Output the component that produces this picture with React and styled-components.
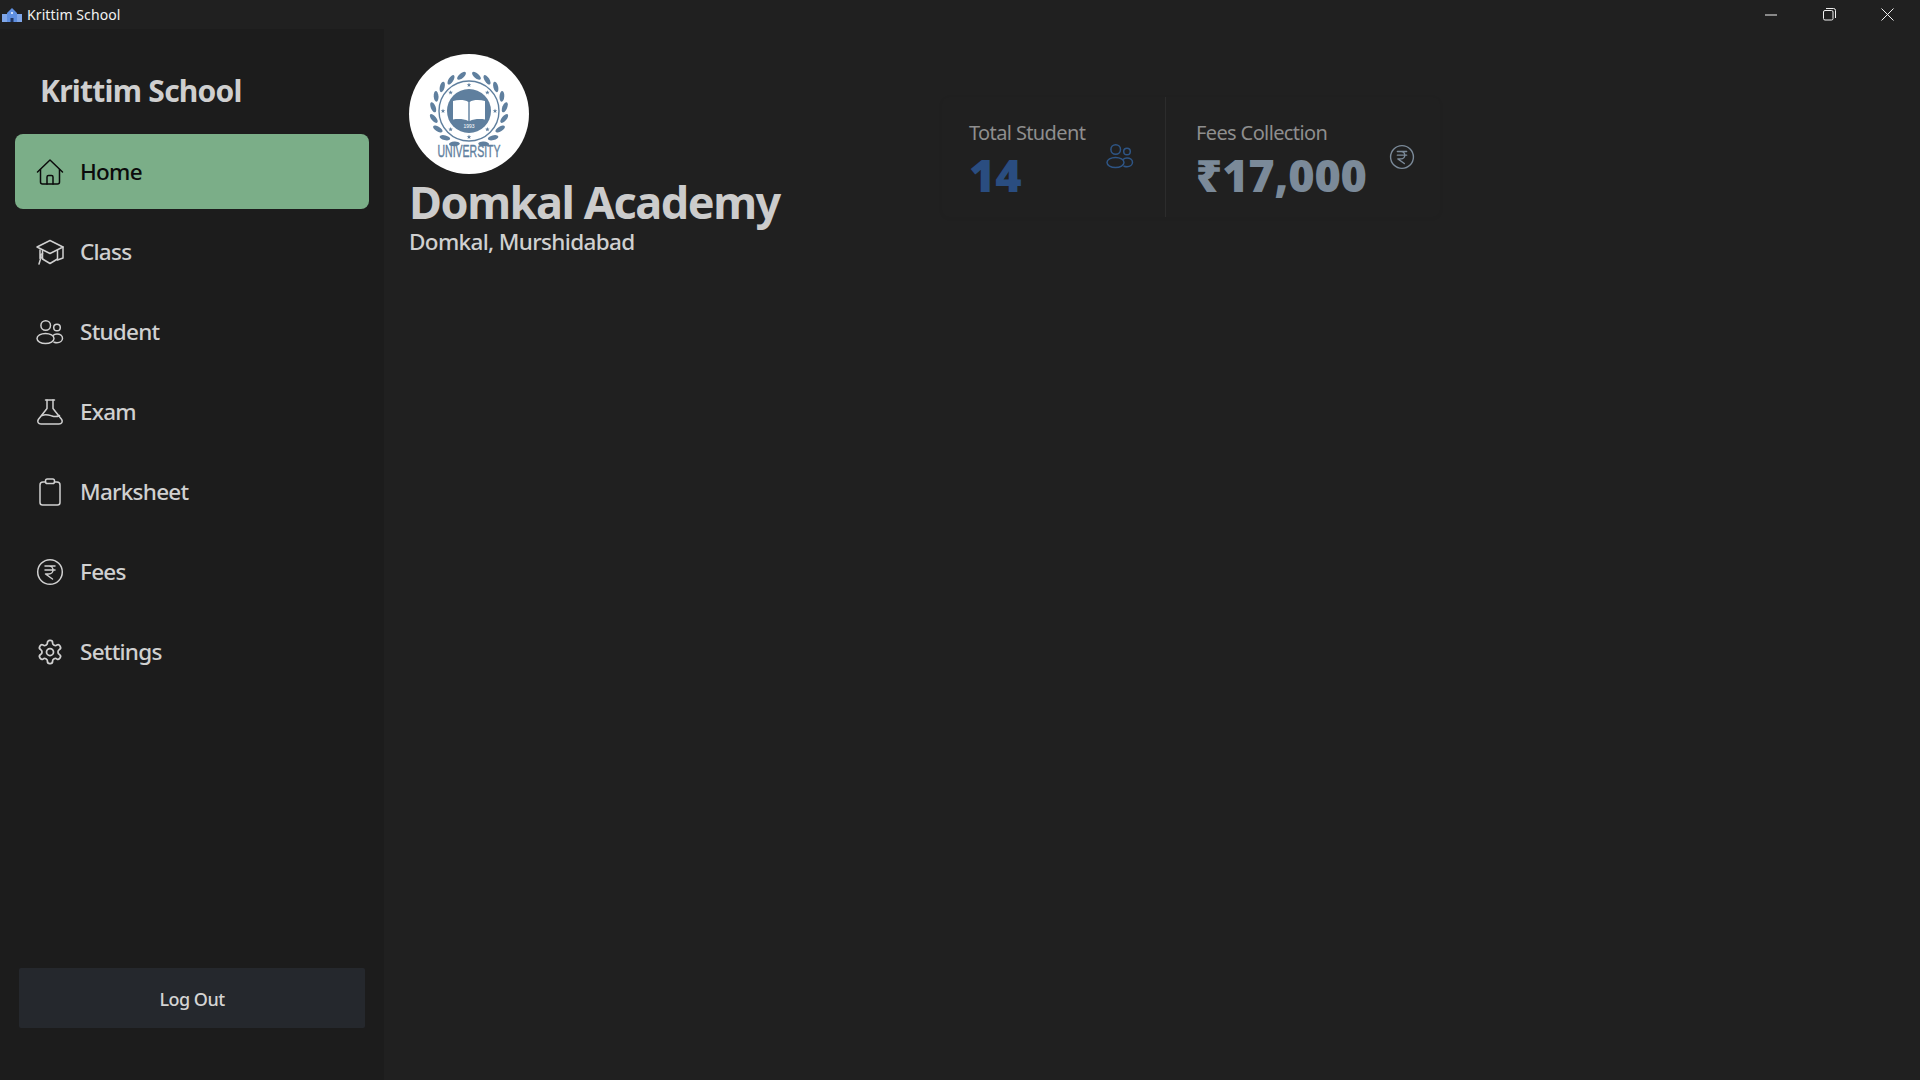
import React from "react";
import styled, { createGlobalStyle } from "styled-components";

const Global = createGlobalStyle`
  html, body { margin: 0; padding: 0; height: 100%; background: #202020; }
  #root { height: 100%; }
  * { box-sizing: border-box; }
  body { font-family: "Noto Sans", "Open Sans", "DejaVu Sans", sans-serif; overflow: hidden; }
`;

const Window = styled.div`
  width: 1920px; height: 1080px; display: flex; flex-direction: column; background: #202020;
`;
const TitleBar = styled.header`
  height: 29px; flex: none; display: flex; align-items: center; background: #202020; color: #f2f2f2; padding-right: 4px;
`;
const TitleIcon = styled.svg`
  width: 20px; height: 14px; margin-left: 2px; margin-right: 5px; display: block;
`;
const TitleText = styled.span`
  font-size: 14px; letter-spacing: 0.1px; flex: 1;
`;
const WinButton = styled.button`
  width: 58px; height: 29px; padding: 0; border: 0; background: none; display: flex;
  align-items: center; justify-content: center;
`;
const Body = styled.div`flex: 1; display: flex; min-height: 0;`;
const Sidebar = styled.aside`
  width: 384px; flex: none; background: #1c1c1c; display: flex; flex-direction: column; padding: 0 15px;
`;
const Brand = styled.h1`
  margin: 0; height: 105px; padding: 33px 0 0 25px; font-size: 30px; line-height: 57px; font-weight: 700;
  color: #cfcfcf; letter-spacing: -0.75px; white-space: nowrap;
`;
const Nav = styled.nav`display: flex; flex-direction: column; gap: 5px;`;
const NavItem = styled.a`
  height: 75px; display: flex; align-items: center; padding-left: 21px; gap: 16px; border-radius: 8px;
  font-size: 22.5px; letter-spacing: -0.75px; font-weight: 500;
  background: ${p => (p.$active ? "#7bae88" : "transparent")};
  color: ${p => (p.$active ? "#0b0b0b" : "#d0d0d0")};
`;
const NavIcon = styled.svg`
  width: 28px; height: 28px; flex: none; fill: none; stroke: currentColor; stroke-width: 1.5;
  stroke-linecap: round; stroke-linejoin: round;
`;
const LogoutButton = styled.button`
  margin: auto 4px 52px; height: 60px; border: 0; border-radius: 2px; background: #25282d; color: #d4d4d4;
  font-family: inherit; font-size: 18px; font-weight: 500; letter-spacing: -0.5px; padding: 2px 0 0;
`;
const Main = styled.main`
  flex: 1; padding: 25px; display: grid; grid-template-columns: 533px auto; align-content: start; justify-content: start;
`;
const School = styled.section`display: flex; flex-direction: column;`;
const LogoDisc = styled.div`
  width: 120px; height: 120px; border-radius: 50%; background: #fff; display: flex; align-items: center; justify-content: center;
`;
const SchoolName = styled.h2`
  margin: 1px 0 0; font-size: 45px; line-height: 54px; font-weight: 700; color: #cccccc; letter-spacing: -1.45px; white-space: nowrap;
`;
const SchoolPlace = styled.p`
  margin: 0; font-size: 22.5px; line-height: 26px; font-weight: 500; color: #d0d0d0; letter-spacing: -0.66px; white-space: nowrap;
`;
const Stats = styled.section`
  margin-top: 43px; height: 120px; display: flex; border-radius: 8px; box-shadow: 0 1px 4px rgba(0,0,0,.05);
`;
const Stat = styled.div`
  width: ${p => p.$w}px; padding: 23px 0 0 ${p => p.$pad}px; display: grid; grid-template-columns: ${p => p.$col}px 1fr;
  border-left: ${p => (p.$divided ? "1px solid #2c2c2c" : "0")};
`;
const StatText = styled.div`display: flex; flex-direction: column;`;
const StatLabel = styled.span`
  font-size: 20px; line-height: 26px; color: #8e8e8e; letter-spacing: -0.62px; white-space: nowrap;
`;
const StatValue = styled.span`
  font-size: 45px; line-height: 49px; margin-top: 4px; font-weight: 900; color: ${p => p.$color}; letter-spacing: -0.2px; white-space: nowrap;
`;
const StatIcon = styled.svg`
  width: ${p => p.$size}px; height: ${p => p.$size}px; margin-top: ${p => 50 - p.$size}px; fill: none; stroke: ${p => p.$color}; stroke-width: 1.5;
  stroke-linecap: round; stroke-linejoin: round;
`;

const HomeIcon = () => (
  <NavIcon viewBox="0 0 28 28">
    <path d="M1.5 14 14 2l12.5 12" />
    <path d="M4.5 11.5V24a2 2 0 0 0 2 2h15a2 2 0 0 0 2-2V11.5" />
    <path d="M11 26v-7a1.5 1.5 0 0 1 1.5-1.5h3A1.5 1.5 0 0 1 17 19v7" />
  </NavIcon>
);
const CapIcon = () => (
  <NavIcon viewBox="0 0 28 28">
    <path d="M14 2.5 27 9l-13 6.5L1 9z" />
    <path d="M6.5 12.5V21l7.5 4.5 7.500-4.500v-8.500" />
    <path d="M27 9v11l-5.500 2" />
    <path d="M4 12v8.500M6.500 15.500 5 16.500v3l1.500 1M4.500 21l-1.500 5" />
  </NavIcon>
);
const PeopleGlyph = () => (
  <>
    <circle cx="9.700" cy="7.500" r="4.800" />
    <circle cx="21" cy="9.500" r="3.300" />
    <ellipse cx="9.500" cy="20.500" rx="8.500" ry="5" />
    <path d="M17 17.500c1-1 2.500-1.500 4-1.500 3 0 5.500 1.700 5.500 4.300S24 24.800 21 24.800c-1 0-2-.2-3-.5" />
  </>
);
const StudentIcon = () => <NavIcon viewBox="0 0 28 28"><PeopleGlyph /></NavIcon>;
const FlaskIcon = () => (
  <NavIcon viewBox="0 0 28 28">
    <path d="M9.500 2h9" />
    <path d="M11 2v8.500L2.300 21.500C1 23.700 2.300 26 5 26h18c2.700 0 4-2.300 2.700-4.500L17 10.500V2" />
    <path d="M6 17.500c4-2 7-.500 10 .500s5.500.600 7.500-.500" />
  </NavIcon>
);
const ClipboardIcon = () => (
  <NavIcon viewBox="0 0 28 28">
    <path d="M9.500 4H7a3 3 0 0 0-3 3v17.500a2.500 2.500 0 0 0 2.500 2.500h15a2.500 2.500 0 0 0 2.500-2.500V7a3 3 0 0 0-3-3h-2.500" />
    <rect x="9.500" y="1" width="9" height="4.500" rx="1.800" />
  </NavIcon>
);
const RupeeGlyph = () => (
  <>
    <circle cx="14" cy="14" r="12.300" />
    <path d="M9 8h10M9 12h10M11 8h2a4 4 0 0 1 0 8h-3.500l7 5" />
  </>
);
const FeesIcon = () => <NavIcon viewBox="0 0 28 28"><RupeeGlyph /></NavIcon>;
const GearIcon = () => (
  <NavIcon viewBox="0 0 24 24" strokeWidth="1.3">
    <path d="M12.220 2h-.440a2 2 0 0 0-2 2v.180a2 2 0 0 1-1 1.730l-.430.250a2 2 0 0 1-2 0l-.150-.080a2 2 0 0 0-2.730.730l-.220.380a2 2 0 0 0 .730 2.730l.150.100a2 2 0 0 1 1 1.720v.510a2 2 0 0 1-1 1.740l-.150.090a2 2 0 0 0-.730 2.730l.220.380a2 2 0 0 0 2.730.730l.150-.080a2 2 0 0 1 2 0l.430.250a2 2 0 0 1 1 1.730V20a2 2 0 0 0 2 2h.440a2 2 0 0 0 2-2v-.180a2 2 0 0 1 1-1.730l.430-.250a2 2 0 0 1 2 0l.150.080a2 2 0 0 0 2.730-.730l.220-.390a2 2 0 0 0-.730-2.730l-.150-.080a2 2 0 0 1-1-1.740v-.500a2 2 0 0 1 1-1.740l.150-.090a2 2 0 0 0 .730-2.730l-.220-.380a2 2 0 0 0-2.730-.730l-.150.080a2 2 0 0 1-2 0l-.430-.250a2 2 0 0 1-1-1.730V4a2 2 0 0 0-2-2z" />
    <circle cx="12" cy="12" r="3" />
  </NavIcon>
);

const items = [
  ["Home", HomeIcon], ["Class", CapIcon], ["Student", StudentIcon], ["Exam", FlaskIcon],
  ["Marksheet", ClipboardIcon], ["Fees", FeesIcon], ["Settings", GearIcon],
];

const LOGO = "#5f7f9e";
const CX = 60;
const CY = 57;
const leaves = Array.from({ length: 9 }, (_, i) => {
  const deg = 12 + i * 18;
  const t = (deg * Math.PI) / 180;
  const r = 36;
  return [
    { x: CX + r * Math.sin(t), y: CY - r * Math.cos(t), rot: deg - 90 + 28 },
    { x: CX - r * Math.sin(t), y: CY - r * Math.cos(t), rot: -(deg - 90 + 28) },
  ];
}).flat();
const starPoints = (x, y, o = 2.4, n = 1) =>
  Array.from({ length: 10 }, (_, i) => {
    const a = (i * Math.PI) / 5 - Math.PI / 2;
    const rr = i % 2 ? n : o;
    return `${(x + rr * Math.cos(a)).toFixed(2)},${(y + rr * Math.sin(a)).toFixed(2)}`;
  }).join(" ");
const stars = Array.from({ length: 8 }, (_, i) => {
  const a = (i * Math.PI) / 4;
  return [CX + 26 * Math.sin(a), CY - 26 * Math.cos(a)];
});

const Logo = () => (
  <svg width="120" height="120" viewBox="0 0 120 120">
    {leaves.map((l, i) => (
      <ellipse key={i} cx={l.x} cy={l.y} rx="2.400" ry="5.400" fill={LOGO} transform={`rotate(${l.rot} ${l.x} ${l.y})`} />
    ))}
    <circle cx={CX} cy={CY} r="30" fill="none" stroke={LOGO} strokeWidth="1.400" />
    {stars.map(([x, y], i) => <polygon key={i} points={starPoints(x, y)} fill={LOGO} />)}
    <circle cx={CX} cy={CY} r="22" fill={LOGO} />
    <path d="M44 47c5-1.500 12-1.500 15.300 1v19c-4-2-10-2.500-15.300-1.500zM76 47c-5-1.500-12-1.500-15.300 1v19c4-2 10-2.500 15.300-1.500z" fill="#fff" />
    <text x={CX} y="74" textAnchor="middle" fontFamily="'Liberation Sans', sans-serif" fontSize="5" fill="#fff">1993</text>
    <text x={CX} y="66.500" textAnchor="middle" fontFamily="'Liberation Sans', sans-serif" fontSize="10.500" fill={LOGO} stroke={LOGO} strokeWidth=".25" transform="scale(1 1.550)">UNIVERSITY</text>
  </svg>
);

export default function App() {
  return (
    <Window>
      <Global />
      <TitleBar>
        <TitleIcon viewBox="0 0 20 14">
          <path d="M0 6h5v8H0zM15 6h5v8h-5z" fill="#7fa6e8" />
          <path d="M5 5 10 0l5 5v9H5z" fill="#5f8fe0" />
          <path d="M8.500 10h3v4h-3z" fill="#20345f" />
          <path d="M9 4h2v2H9z" fill="#cfe0fb" />
        </TitleIcon>
        <TitleText>Krittim School</TitleText>
        <WinButton aria-label="Minimize">
          <svg width="12" height="2" viewBox="0 0 12 2"><path d="M0 1h12" stroke="#f0f0f0" /></svg>
        </WinButton>
        <WinButton aria-label="Restore">
          <svg width="13" height="13" viewBox="0 0 13 13" fill="none" stroke="#f0f0f0">
            <rect x=".5" y="2.500" width="9.500" height="9.500" rx="1.500" />
            <path d="M3 .5h7.500a2 2 0 0 1 2 2V10" />
          </svg>
        </WinButton>
        <WinButton aria-label="Close">
          <svg width="13" height="13" viewBox="0 0 13 13"><path d="M.5.5l12 12M12.500.5l-12 12" stroke="#f0f0f0" /></svg>
        </WinButton>
      </TitleBar>
      <Body>
        <Sidebar>
          <Brand>Krittim School</Brand>
          <Nav>
            {items.map(([label, Icon], i) => (
              <NavItem key={label} $active={i === 0}><Icon />{label}</NavItem>
            ))}
          </Nav>
          <LogoutButton>Log Out</LogoutButton>
        </Sidebar>
        <Main>
          <School>
            <LogoDisc><Logo /></LogoDisc>
            <SchoolName>Domkal Academy</SchoolName>
            <SchoolPlace>Domkal, Murshidabad</SchoolPlace>
          </School>
          <Stats>
            <Stat $w={223} $pad={27} $col={137}>
              <StatText>
                <StatLabel>Total Student</StatLabel>
                <StatValue $color="#2a4d80">14</StatValue>
              </StatText>
              <StatIcon viewBox="0 0 28 28" $size={28} $color="#2e5585"><PeopleGlyph /></StatIcon>
            </Stat>
            <Stat $w={275} $pad={30} $col={193} $divided>
              <StatText>
                <StatLabel>Fees Collection</StatLabel>
                <StatValue $color="#7b8a99">₹17,000</StatValue>
              </StatText>
              <StatIcon viewBox="0 0 28 28" $size={26} $color="#7b8a99"><RupeeGlyph /></StatIcon>
            </Stat>
          </Stats>
        </Main>
      </Body>
    </Window>
  );
}
